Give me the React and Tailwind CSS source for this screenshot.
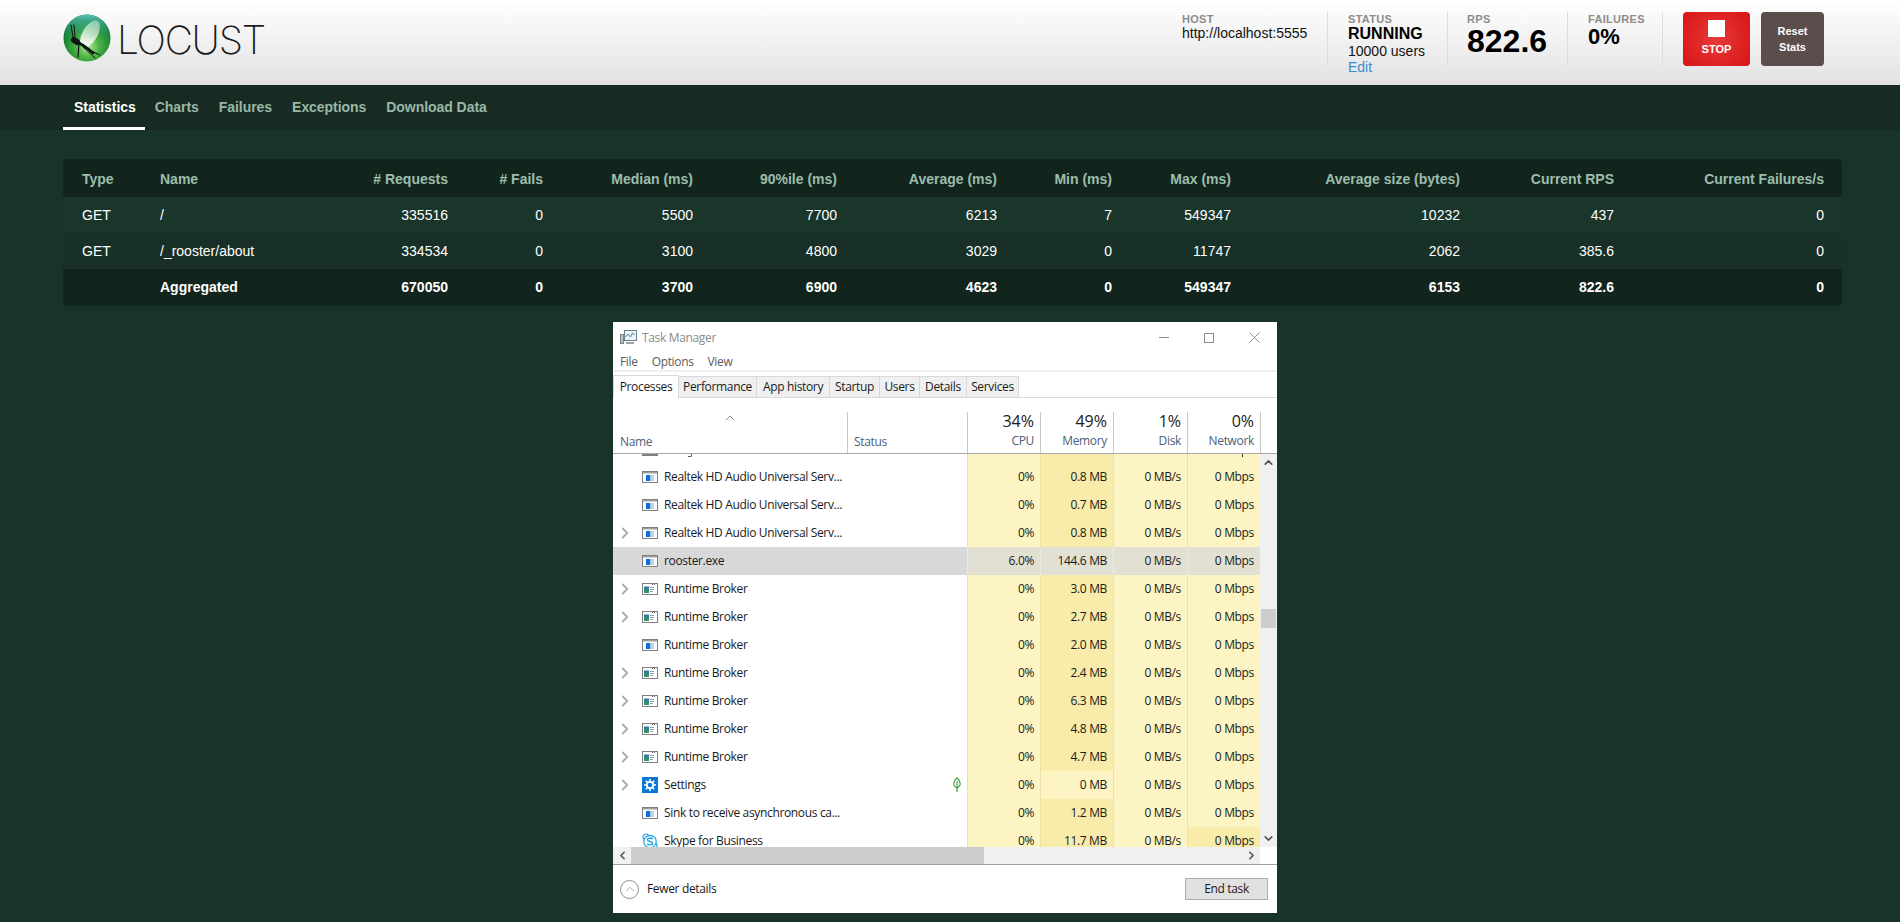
import React from 'react';
import { ChevronRight, ChevronUp, ChevronDown, ChevronLeft } from 'lucide-react';

const arial = { fontFamily: '"Liberation Sans", Arial, sans-serif' };
const segoe = { fontFamily: '"Open Sans", "Noto Sans", sans-serif' };

const columns = [
  { label: 'Type', w: 'w-[78px]', left: true, key: 'type' },
  { label: 'Name', w: 'w-[200px]', left: true, key: 'name' },
  { label: '# Requests', w: 'w-[125px]', key: 'reqs' },
  { label: '# Fails', w: 'w-[95px]', key: 'fails' },
  { label: 'Median (ms)', w: 'w-[150px]', key: 'median' },
  { label: '90%ile (ms)', w: 'w-[144px]', key: 'p90' },
  { label: 'Average (ms)', w: 'w-[160px]', key: 'avg' },
  { label: 'Min (ms)', w: 'w-[115px]', key: 'min' },
  { label: 'Max (ms)', w: 'w-[119px]', key: 'max' },
  { label: 'Average size (bytes)', w: 'w-[229px]', key: 'size' },
  { label: 'Current RPS', w: 'w-[154px]', key: 'rps' },
  { label: 'Current Failures/s', w: 'w-[210px]', key: 'fps' },
];

const stats = [
  { type: 'GET', name: '/', reqs: 335516, fails: 0, median: 5500, p90: 7700, avg: 6213, min: 7, max: 549347, size: 10232, rps: 437, fps: 0 },
  { type: 'GET', name: '/_rooster/about', reqs: 334534, fails: 0, median: 3100, p90: 4800, avg: 3029, min: 0, max: 11747, size: 2062, rps: 385.6, fps: 0 },
  { type: '', name: 'Aggregated', reqs: 670050, fails: 0, median: 3700, p90: 6900, avg: 4623, min: 0, max: 549347, size: 6153, rps: 822.6, fps: 0, total: true },
];

const processes = [
  { name: 'Realtek HD Audio Universal Serv...', icon: 'app', cpu: '0%', mem: '0.8 MB' },
  { name: 'Realtek HD Audio Universal Serv...', icon: 'app', cpu: '0%', mem: '0.7 MB' },
  { name: 'Realtek HD Audio Universal Serv...', icon: 'app', cpu: '0%', mem: '0.8 MB', more: true },
  { name: 'rooster.exe', icon: 'app', cpu: '6.0%', mem: '144.6 MB', selected: true },
  { name: 'Runtime Broker', icon: 'broker', cpu: '0%', mem: '3.0 MB', more: true },
  { name: 'Runtime Broker', icon: 'broker', cpu: '0%', mem: '2.7 MB', more: true },
  { name: 'Runtime Broker', icon: 'app', cpu: '0%', mem: '2.0 MB' },
  { name: 'Runtime Broker', icon: 'broker', cpu: '0%', mem: '2.4 MB', more: true },
  { name: 'Runtime Broker', icon: 'broker', cpu: '0%', mem: '6.3 MB', more: true },
  { name: 'Runtime Broker', icon: 'broker', cpu: '0%', mem: '4.8 MB', more: true },
  { name: 'Runtime Broker', icon: 'broker', cpu: '0%', mem: '4.7 MB', more: true },
  { name: 'Settings', icon: 'settings', cpu: '0%', mem: '0 MB', more: true, leaf: true, lightMem: true },
  { name: 'Sink to receive asynchronous ca...', icon: 'app', cpu: '0%', mem: '1.2 MB' },
  { name: 'Skype for Business', icon: 'skype', cpu: '0%', mem: '11.7 MB', hotNet: true },
];

const tabs = [
  { label: 'Performance', w: 'w-[78px]' },
  { label: 'App history', w: 'w-[73px]' },
  { label: 'Startup', w: 'w-[50px]' },
  { label: 'Users', w: 'w-[40px]' },
  { label: 'Details', w: 'w-[47px]' },
  { label: 'Services', w: 'w-[52px]' },
];

const LocustLogo = () => (
  <svg width="48" height="48" viewBox="0 0 48 48" className="shrink-0">
    <defs>
      <radialGradient id="ball" cx="52%" cy="68%" r="62%">
        <stop offset="0%" stopColor="#b4ea9c" />
        <stop offset="40%" stopColor="#4cb043" />
        <stop offset="78%" stopColor="#1c8a34" />
        <stop offset="100%" stopColor="#0c5f35" />
      </radialGradient>
      <linearGradient id="rim" x1="0" y1="0" x2="0" y2="1">
        <stop offset="0%" stopColor="#56c2b4" />
        <stop offset="55%" stopColor="#2a9a5c" stopOpacity="0" />
      </linearGradient>
      <linearGradient id="wing" x1="0" y1="0" x2="0" y2="1">
        <stop offset="0%" stopColor="#ffffff" stopOpacity="0.4" />
        <stop offset="100%" stopColor="#ffffff" stopOpacity="0.95" />
      </linearGradient>
    </defs>
    <circle cx="24" cy="24" r="23.5" fill="url(#ball)" />
    <circle cx="24" cy="24" r="23.5" fill="url(#rim)" />
    <ellipse cx="27" cy="20" rx="7.5" ry="15" transform="rotate(30 27 20)" fill="url(#wing)" />
    <g stroke="#0d1512" fill="none" strokeLinecap="round">
      <path d="M12 27 Q21 31 30 39" strokeWidth="3" />
      <path d="M11 26 L14 28" strokeWidth="6" />
      <path d="M10 23 L8 11" strokeWidth="1" />
      <path d="M12 23 L11 11" strokeWidth="1" />
      <path d="M16 30 L15 43" strokeWidth="1.2" />
      <path d="M20 33 L32 44" strokeWidth="1" />
      <path d="M26 36 L37 41" strokeWidth="1" />
    </g>
  </svg>
);

const AppIcon = () => (
  <svg width="16" height="12" viewBox="0 0 16 12" className="shrink-0">
    <rect x="0.5" y="0.5" width="15" height="11" fill="#fff" stroke="#808080" />
    <rect x="1" y="1" width="14" height="1.5" fill="#a0a0a0" />
    <rect x="4" y="4" width="4.5" height="6" fill="#0a6fd0" />
    <rect x="8.5" y="4" width="3.5" height="6" fill="#b8d4ee" />
  </svg>
);

const BrokerIcon = () => (
  <svg width="16" height="12" viewBox="0 0 16 12" className="shrink-0">
    <defs>
      <linearGradient id="brokerPanel" x1="0" y1="0" x2="0" y2="1">
        <stop offset="0%" stopColor="#2f6fa8" />
        <stop offset="100%" stopColor="#3d9a5c" />
      </linearGradient>
    </defs>
    <rect x="0.5" y="0.5" width="15" height="11" fill="#fff" stroke="#808080" />
    <path d="M10 1.5h1M12 1.5h1" stroke="#555" />
    <rect x="2" y="3.5" width="5" height="6.5" fill="url(#brokerPanel)" />
    <path d="M8 4.5h4M8 6.5h4M8 8.5h3" stroke="#8fa8a0" />
  </svg>
);

const SettingsIcon = () => (
  <svg width="16" height="16" viewBox="0 0 16 16" className="shrink-0">
    <rect width="16" height="16" fill="#0a78d7" />
    <circle cx="8" cy="8" r="3.2" fill="none" stroke="#fff" strokeWidth="1.8" />
    <path d="M8 2v2M8 12v2M2 8h2M12 8h2M3.8 3.8l1.4 1.4M10.8 10.8l1.4 1.4M3.8 12.2l1.4-1.4M10.8 5.2l1.4-1.4" stroke="#fff" strokeWidth="1.6" />
  </svg>
);

const SkypeIcon = () => (
  <svg width="16" height="17" viewBox="0 0 16 17" className="shrink-0">
    <circle cx="4" cy="4" r="3" fill="#fff" stroke="#12a5e8" strokeWidth="1.2" />
    <circle cx="12" cy="13" r="3" fill="#fff" stroke="#12a5e8" strokeWidth="1.2" />
    <circle cx="8" cy="8.5" r="6.2" fill="#fff" stroke="#12a5e8" strokeWidth="1.2" />
    <path d="M10.8 6C9.8 4.7 5.4 4.6 5.4 6.7c0 2.3 5.3 1.2 5.3 3.6 0 2.1-4.5 2-5.5.6" fill="none" stroke="#12a5e8" strokeWidth="1.4" />
  </svg>
);

const icons = { app: AppIcon, broker: BrokerIcon, settings: SettingsIcon, skype: SkypeIcon };

const MetricCell = ({ children, hot, selected, w = 'w-[73px]' }) => {
  const bg = selected ? 'bg-[#e2e0d2]' : hot ? 'bg-[#f9ecaa]' : 'bg-[#fdf4c4]';
  const line = selected ? 'border-[#ecebe0]' : 'border-[#f1e0a4]';
  return (
    <div className={`${w} shrink-0 h-full flex items-center justify-end pr-[6px] border-l ${line} ${bg}`}>
      {children}
    </div>
  );
};

const ProcessRow = ({ proc }) => {
  const Icon = icons[proc.icon];
  return (
    <div className={`h-[28px] flex items-center text-[#1a1a1a] shrink-0 ${proc.selected ? 'bg-[#d8d8d8]' : ''}`}>
      <div className="w-[354px] shrink-0 h-full flex items-center relative">
        <div className="w-[24px] flex justify-center shrink-0">
          {proc.more && <ChevronRight size={18} strokeWidth={2.4} className="text-[#ababab]" />}
        </div>
        <div className="ml-[5px] w-[16px] flex justify-center shrink-0"><Icon /></div>
        <span className="ml-[6px] whitespace-nowrap">{proc.name}</span>
        {proc.leaf && (
          <svg width="10" height="16" viewBox="0 0 10 16" className="absolute left-[339px] top-[6px]">
            <path d="M5 1C1 4 .5 9 5 11 9.5 9 9 4 5 1ZM5 4V15" fill="none" stroke="#2f9a3a" strokeWidth="1.1" />
          </svg>
        )}
      </div>
      <MetricCell selected={proc.selected}>{proc.cpu}</MetricCell>
      <MetricCell selected={proc.selected} hot={!proc.lightMem}>{proc.mem}</MetricCell>
      <MetricCell selected={proc.selected} w="w-[74px]">0 MB/s</MetricCell>
      <MetricCell selected={proc.selected} hot={proc.hotNet}>0 Mbps</MetricCell>
    </div>
  );
};

// bottom of the row that is scrolled away above the list
const ClippedRow = () => (
  <div className="h-[9px] flex shrink-0">
    <div className="w-[354px] shrink-0 flex items-start">
      <div className="ml-[29px] w-[16px] h-[2px] bg-[#808080]" />
      <div className="ml-[30px] w-[4px] h-[3px] border-b border-r border-[#555] rounded-br-[2px]" />
    </div>
    <MetricCell />
    <MetricCell hot />
    <MetricCell w="w-[74px]" />
    <div className="w-[73px] shrink-0 h-full bg-[#fdf4c4] border-l border-[#f1e0a4] flex items-start pl-[54px]">
      <div className="w-px h-[3px] bg-[#333]" />
    </div>
  </div>
);

const HeaderCol = ({ pct, label, w = 'w-[73px]' }) => (
  <div className={`${w} shrink-0 h-[41px] border-l border-[#c8c8c8] flex flex-col items-end pr-[6px]`}>
    <span className="text-[16px] leading-[18px] tracking-normal text-[#1a1a1a]">{pct}</span>
    <span className="leading-[16px] mt-[3px] text-[#4c607a]">{label}</span>
  </div>
);

const TaskManager = () => (
  <div className="w-[664px] h-[591px] ml-[613px] mt-[16px] bg-white flex flex-col text-[#1a1a1a] text-[12px] tracking-[-0.34px]" style={segoe}>
    <div className="h-[31px] flex items-center pl-[7px] pr-[17px] shrink-0">
      <svg width="17" height="15" viewBox="0 0 17 15" className="shrink-0">
        <rect x="4.5" y="0.5" width="12" height="10" fill="#eef4f8" stroke="#6b7f8c" />
        <path d="M5.5 7l2.5-3 2.5 3 2-4 2.5 2" fill="none" stroke="#4b86b0" />
        <rect x="0.5" y="4.5" width="3" height="9" fill="#b9c2c8" stroke="#7b858c" />
        <rect x="6" y="12" width="8" height="2" fill="#9aa5ac" />
      </svg>
      <span className="ml-[5px] text-[#8a8a8a]">Task Manager</span>
      <div className="ml-auto flex items-center gap-[35px]">
        <div className="w-[10px] h-px bg-[#8b8b8b]" />
        <div className="w-[10px] h-[10px] border border-[#8b8b8b]" />
        <svg width="11" height="11" viewBox="0 0 11 11">
          <path d="M.5.5l10 10M10.5.5l-10 10" stroke="#8b8b8b" fill="none" />
        </svg>
      </div>
    </div>
    <div className="h-[17px] flex items-center gap-[14px] pl-[7px] text-[#5c5c5c] shrink-0">
      <span>File</span>
      <span>Options</span>
      <span>View</span>
    </div>
    <div className="h-[2px] bg-[#f0f0f0] shrink-0" />
    <div className="h-[26px] flex items-end border-b border-[#d9d9d9] shrink-0">
      <div className="w-[66px] h-[23px] -mb-px bg-white border border-b-0 border-[#d9d9d9] flex items-center justify-center">Processes</div>
      {tabs.map(tab => (
        <div key={tab.label} className={`${tab.w} h-[21px] bg-[#f0f0f0] border-r border-t border-[#d9d9d9] flex items-center justify-center`}>{tab.label}</div>
      ))}
    </div>
    <div className="h-[56px] flex items-end border-b border-[#a8a8a8] shrink-0">
      <div className="w-[234px] shrink-0 h-[41px] relative text-[#4c607a]">
        <ChevronUp size={16} strokeWidth={1} className="absolute left-[109px] -top-[2px] text-[#555]" />
        <span className="absolute left-[7px] bottom-[2px]">Name</span>
      </div>
      <div className="w-[120px] shrink-0 h-[41px] border-l border-[#c8c8c8] relative text-[#4c607a]">
        <span className="absolute left-[6px] bottom-[2px]">Status</span>
      </div>
      <HeaderCol pct="34%" label="CPU" />
      <HeaderCol pct="49%" label="Memory" />
      <HeaderCol pct="1%" label="Disk" w="w-[74px]" />
      <HeaderCol pct="0%" label="Network" />
      <div className="h-[41px] border-l border-[#c8c8c8]" />
    </div>
    <div className="h-[410px] flex shrink-0">
      <div className="w-[647px] shrink-0 flex flex-col">
        <div className="h-[393px] overflow-hidden flex flex-col shrink-0">
          <ClippedRow />
          {processes.map((proc, i) => <ProcessRow key={i} proc={proc} />)}
        </div>
        <div className="h-[17px] bg-[#f0f0f0] flex items-center shrink-0">
          <div className="w-[18px] flex justify-center shrink-0">
            <ChevronLeft size={13} strokeWidth={3} className="text-[#555]" />
          </div>
          <div className="w-[353px] h-full bg-[#cdcdcd]" />
          <ChevronRight size={13} strokeWidth={3} className="text-[#555] ml-auto mr-[2px]" />
        </div>
      </div>
      <div className="w-[17px] h-[393px] bg-[#f0f0f0] flex flex-col items-center relative">
        <ChevronUp size={13} strokeWidth={3} className="text-[#555] mt-[2px]" />
        <div className="absolute top-[155px] left-[1px] w-[15px] h-[19px] bg-[#cdcdcd]" />
        <ChevronDown size={13} strokeWidth={3} className="text-[#555] mt-auto mb-[2px]" />
      </div>
    </div>
    <div className="h-[49px] border-t border-[#a0a0a0] flex items-center pl-[7px] pr-[9px] shrink-0">
      <div className="w-[19px] h-[19px] rounded-full border border-[#8f8f8f] flex items-center justify-center">
        <ChevronUp size={14} strokeWidth={1.2} className="text-[#8f8f8f]" />
      </div>
      <span className="ml-[8px]">Fewer details</span>
      <div className="ml-auto w-[83px] h-[22px] bg-[#e1e1e1] border border-[#adadad] flex items-center justify-center">End task</div>
    </div>
  </div>
);

const Stat = ({ label, children, w }) => (
  <div className={`${w} h-[53px] border-r border-[#dcdcdc] shrink-0`}>
    <div className="text-[11px] leading-[13px] font-bold text-[#8c8c8c] tracking-[0.3px] pt-px">{label}</div>
    {children}
  </div>
);

const Header = () => (
  <header className="h-[85px] bg-gradient-to-b from-white to-[#e2e2e2] flex pl-[63px] shrink-0">
    <div className="flex items-start pt-[14px]">
      <LocustLogo />
      <span className="ml-[6px] mt-[6px] text-[39px] leading-none font-extralight text-[#1c1c1c] tracking-[-1.3px]" style={{ fontFamily: 'Inter, sans-serif' }}>LOCUST</span>
    </div>
    <div className="ml-auto flex pt-[12px] pr-[76px]">
      <Stat label="HOST" w="w-[146px]">
        <div className="text-[14px] leading-[15px] text-[#111]">http://localhost:5555</div>
      </Stat>
      <div className="pl-[20px] flex">
        <Stat label="STATUS" w="w-[100px]">
          <div className="text-[16px] leading-[16px] font-bold text-black">RUNNING</div>
          <div className="text-[14px] leading-[17px] mt-[1px] text-[#111]">10000 users</div>
          <div className="text-[14px] leading-[15px] text-[#428bca]">Edit</div>
        </Stat>
      </div>
      <div className="pl-[19px] flex">
        <Stat label="RPS" w="w-[101px]">
          <div className="text-[32px] leading-[32px] font-bold text-black -mt-px">822.6</div>
        </Stat>
      </div>
      <div className="pl-[20px] flex">
        <Stat label="FAILURES" w="w-[75px]">
          <div className="text-[22px] leading-[22px] font-bold text-black">0%</div>
        </Stat>
      </div>
      <div className="ml-[20px] w-[67px] h-[54px] rounded-[4px] bg-[radial-gradient(circle,#e63a3a,#d81414)] flex flex-col items-center pt-[8px] shrink-0">
        <div className="w-[17px] h-[17px] bg-white" />
        <div className="text-[11px] leading-[13px] font-bold text-white mt-[6px]">STOP</div>
      </div>
      <div className="ml-[11px] w-[63px] h-[54px] rounded-[4px] bg-[#5c4d4d] flex items-center justify-center text-center text-[11px] leading-[16px] font-bold text-white shrink-0">
        <span>Reset<br />Stats</span>
      </div>
    </div>
  </header>
);

const Nav = () => (
  <nav className="h-[45px] bg-[#172b22] flex pl-[63px] text-[14px] font-bold tracking-[-0.05px] shrink-0">
    <div className="h-full pl-[11px] pr-[9px] pt-[3px] flex items-center text-white border-b-[3px] border-white">Statistics</div>
    {['Charts', 'Failures', 'Exceptions', 'Download Data'].map(item => (
      <div key={item} className="h-full px-[10px] flex items-center text-[#9ab7a8]">{item}</div>
    ))}
  </nav>
);

const StatsTable = () => (
  <div className="ml-[63px] mt-[29px] w-[1779px] rounded-[4px] overflow-hidden">
    <table className="w-[1779px] table-fixed border-collapse text-[14px]">
      <colgroup>
        {columns.map(c => <col key={c.key} className={c.w} />)}
      </colgroup>
      <thead>
        <tr className="h-[38px] bg-[#12251c]">
          {columns.map(c => (
            <th key={c.key} className={`pl-[19px] pr-[18px] pt-[2px] font-bold text-[#9dbdac] whitespace-nowrap ${c.left ? 'text-left' : 'text-right'}`}>{c.label}</th>
          ))}
        </tr>
      </thead>
      <tbody>
        {stats.map((row, i) => (
          <tr key={i} className={row.total ? 'h-[37px] bg-[#12251c] font-bold text-white' : `h-[36px] text-white ${i === 0 ? 'bg-[#1a352a]' : 'bg-[#183027]'}`}>
            {columns.map(c => (
              <td key={c.key} className={`pl-[19px] pr-[18px] whitespace-nowrap ${c.left ? 'text-left' : 'text-right'}`}>{row[c.key]}</td>
            ))}
          </tr>
        ))}
      </tbody>
    </table>
  </div>
);

export default function App() {
  return (
    <div className="w-[1900px] h-[922px] overflow-hidden bg-[#1a3329] flex flex-col" style={arial}>
      <Header />
      <Nav />
      <StatsTable />
      <TaskManager />
    </div>
  );
}
